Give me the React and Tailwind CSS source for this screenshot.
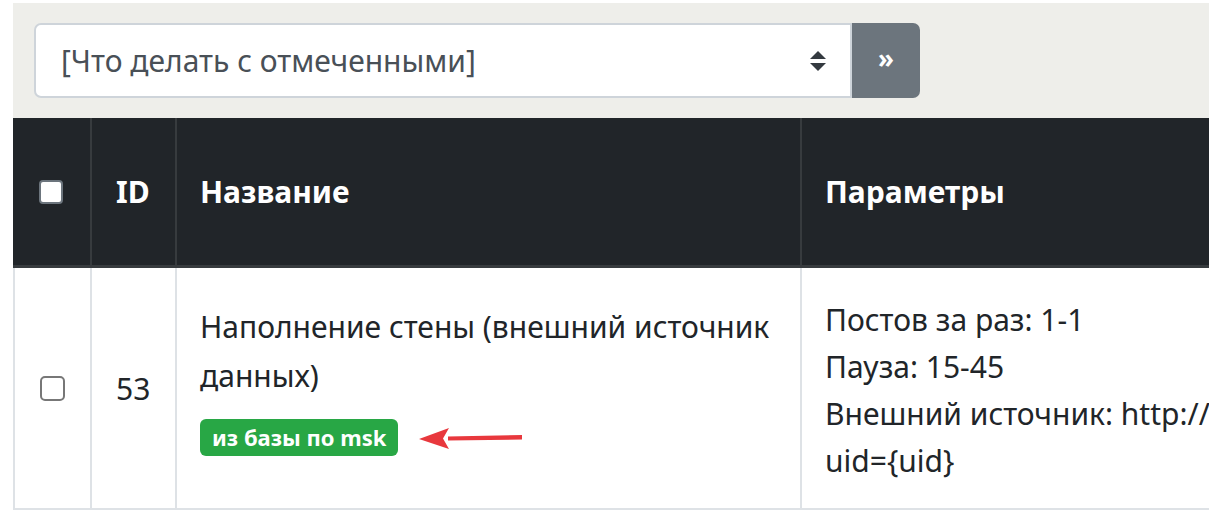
import React from "react";

const FONT = { fontFamily: '"Noto Sans", "Open Sans", sans-serif' };

function SortArrows() {
  return (
    <svg width="16" height="20" viewBox="0 0 16 20" className="shrink-0">
      <path d="M8 0 L16 8 L0 8 Z" fill="#343a40" />
      <path d="M0 12 L16 12 L8 20 Z" fill="#343a40" />
    </svg>
  );
}

function RedArrow() {
  return (
    <svg width="106" height="24" viewBox="0 0 106 24" className="ml-[20px]">
      <path d="M30 10.6 L104 9 L104 13.6 L30 14.4 Z" fill="#e8383d" />
      <path d="M1 13 L31 2 L25 12.5 L31 23 Z" fill="#e8383d" />
    </svg>
  );
}

export default function App() {
  return (
    <div
      className="w-[1209px] h-[515px] overflow-hidden bg-white text-[#212529]"
      style={FONT}
    >
      <div className="ml-[13px] mt-[3px] w-[1400px]">
        {/* bulk actions */}
        <div className="bg-[#eeeeea] h-[115px] pt-[20px] pl-[21px]">
          <div className="flex h-[75px] w-[886px]">
            <div className="flex-1 flex items-center justify-between bg-white border-2 border-[#ced4da] rounded-l-[7px] pl-[25px] pr-[24px]">
              <span className="text-[30px] text-[#495057]">[Что делать с отмеченными]</span>
              <SortArrows />
            </div>
            <button className="w-[68px] bg-[#6c757d] rounded-r-[7px] text-white text-[26px] font-bold flex items-center justify-center pb-[4px]">
              »
            </button>
          </div>
        </div>

        {/* table */}
        <div className="grid grid-cols-[77px_85px_625px_1fr]">
          <div className="bg-[#212529] h-[150px] border-b-[3px] border-[#373b3e] flex items-center justify-center pr-[2px]">
            <span className="w-[24px] h-[24px] bg-white rounded-[4px] border-2 border-[#6c757d]" />
          </div>
          <div className="bg-[#212529] h-[150px] border-b-[3px] border-l-2 border-[#373b3e] flex items-center pl-[24px] text-white font-bold text-[30px]">
            ID
          </div>
          <div className="bg-[#212529] h-[150px] border-b-[3px] border-l-2 border-[#373b3e] flex items-center pl-[23px] text-white font-bold text-[30px]">
            Название
          </div>
          <div className="bg-[#212529] h-[150px] border-b-[3px] border-l-2 border-[#373b3e] flex items-center pl-[23px] text-white font-bold text-[30px]">
            Параметры
          </div>

          <div className="h-[242px] border-l-2 border-b-2 border-[#dee2e6] flex items-center justify-center">
            <span className="w-[25px] h-[25px] bg-white rounded-[5px] border-2 border-[#777]" />
          </div>
          <div className="h-[242px] border-l-2 border-b-2 border-[#dee2e6] flex items-center pl-[24px] text-[30px]">
            53
          </div>
          <div className="h-[242px] border-l-2 border-b-2 border-[#dee2e6] pl-[23px] pt-[34px] text-[30px]">
            <div className="leading-[49px]">
              Наполнение стены (внешний источник
              <br />
              данных)
            </div>
            <div className="flex items-center mt-[19px]">
              <span className="h-[37px] px-[12px] bg-[#28a745] rounded-[6px] text-white font-bold text-[22px] flex items-center">
                из базы по msk
              </span>
              <RedArrow />
            </div>
          </div>
          <div className="h-[242px] border-l-2 border-b-2 border-[#dee2e6] pl-[23px] pt-[28px] text-[30px] leading-[47px] whitespace-nowrap">
            <div>Постов за раз: 1-1</div>
            <div>Пауза: 15-45</div>
            <div>Внешний источник: http://</div>
            <div>uid={"{uid}"}</div>
          </div>
        </div>
      </div>
    </div>
  );
}
